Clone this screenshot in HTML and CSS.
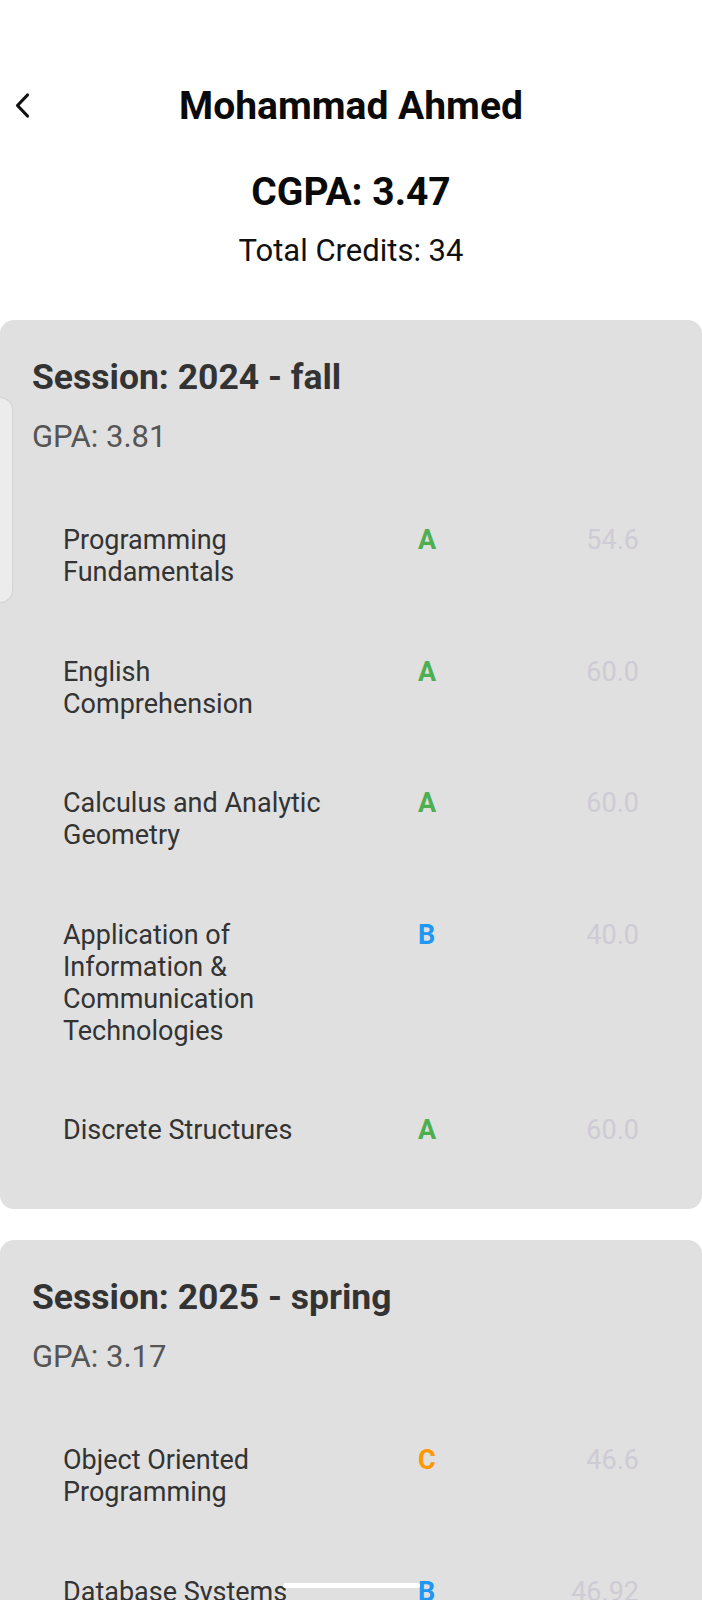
FILE: index.html
```html
<!DOCTYPE html>
<html lang="en">
<head>
<meta charset="utf-8">
<title>Mohammad Ahmed</title>
<link rel="stylesheet" href="styles.css">
</head>
<body>
<div class="screen">
  <header class="top">
    <div class="back">
      <svg width="18" height="28" viewBox="0 0 18 28" aria-hidden="true">
        <path d="M13.5 3 L3.5 13.5 L13.5 24" fill="none" stroke="#111" stroke-width="3.2" stroke-linecap="round" stroke-linejoin="round"/>
      </svg>
    </div>
    <h1 class="title">Mohammad Ahmed</h1>
    <div></div>
  </header>

  <section class="summary">
    <div class="cgpa">CGPA: 3.47</div>
    <div class="credits">Total Credits: 34</div>
  </section>

  <main class="sessions">
    <article class="card">
      <h2 class="session">Session: 2024 - fall</h2>
      <div class="gpa">GPA: 3.81</div>
      <ul class="courses">
        <li class="course"><span class="name">Programming Fundamentals</span><span class="grade g-a">A</span><span class="score">54.6</span></li>
        <li class="course"><span class="name">English Comprehension</span><span class="grade g-a">A</span><span class="score">60.0</span></li>
        <li class="course"><span class="name">Calculus and Analytic Geometry</span><span class="grade g-a">A</span><span class="score">60.0</span></li>
        <li class="course"><span class="name">Application of Information &amp; Communication Technologies</span><span class="grade g-b">B</span><span class="score">40.0</span></li>
        <li class="course"><span class="name">Discrete Structures</span><span class="grade g-a">A</span><span class="score">60.0</span></li>
      </ul>
    </article>

    <article class="card">
      <h2 class="session">Session: 2025 - spring</h2>
      <div class="gpa">GPA: 3.17</div>
      <ul class="courses">
        <li class="course"><span class="name">Object Oriented Programming</span><span class="grade g-c">C</span><span class="score">46.6</span></li>
        <li class="course"><span class="name">Database Systems</span><span class="grade g-b">B</span><span class="score">46.92</span></li>
        <li class="course"><span class="name">Data Structures</span><span class="grade g-b">B</span><span class="score">50.0</span></li>
      </ul>
    </article>
  </main>

  <div class="edge-handle"></div>
  <div class="home-bar"></div>
</div>
</body>
</html>
```

FILE: styles.css
```css
* { box-sizing: border-box; }

html, body {
  margin: 0;
  padding: 0;
  background: #ffffff;
}

body {
  font-family: Roboto, "Noto Sans", "Liberation Sans", sans-serif;
  color: #111;
}

.screen {
  position: relative;
  width: 702px;
  height: 1600px;
  overflow: hidden;
  background: #ffffff;
}

.top {
  display: grid;
  grid-template-columns: 1fr auto 1fr;
  align-items: center;
  padding-top: 83px;
}

.back {
  display: flex;
  align-items: center;
  padding-left: 14px;
}

.back svg { display: block; }

.title {
  margin: 0;
  font-size: 39px;
  font-weight: 700;
  line-height: normal;
  color: #0a0a0a;
}

.summary {
  display: flex;
  flex-direction: column;
  align-items: center;
  margin-top: 40px;
}

.cgpa {
  font-size: 39px;
  font-weight: 700;
  line-height: normal;
  color: #0a0a0a;
}

.credits {
  margin-top: 17px;
  font-size: 31px;
  line-height: normal;
  color: #111;
}

.sessions {
  display: flex;
  flex-direction: column;
  gap: 31px;
  margin-top: 51px;
}

.card {
  background: #e0e0e0;
  border-radius: 14px;
  padding: 36px 32px 29px;
}

.session {
  margin: 0;
  font-size: 35.5px;
  font-weight: 700;
  line-height: normal;
  color: #333333;
}

.gpa {
  margin-top: 20px;
  font-size: 31px;
  line-height: normal;
  color: #555555;
}

.courses {
  list-style: none;
  margin: 35px 0 0;
  padding: 0;
}

.course {
  display: grid;
  grid-template-columns: 270px 1fr auto;
  column-gap: 85px;
  align-items: start;
  padding: 34px 31px 33.6px;
  font-size: 27px;
  line-height: 32px;
}

.name { color: #333333; }

.grade { font-weight: 700; }
.g-a { color: #4caf50; }
.g-b { color: #2196f3; }
.g-c { color: #ff9800; }

.score {
  color: #cfcbd5;
  text-align: right;
}

.edge-handle {
  position: absolute;
  left: -14px;
  top: 398px;
  width: 26px;
  height: 204px;
  background: #ececec;
  border-radius: 12px;
  box-shadow: 0 0 2px rgba(0, 0, 0, 0.18);
}

.home-bar {
  position: absolute;
  left: 283px;
  top: 1583px;
  width: 137px;
  height: 5px;
  border-radius: 3px;
  background: #ffffff;
}
```
